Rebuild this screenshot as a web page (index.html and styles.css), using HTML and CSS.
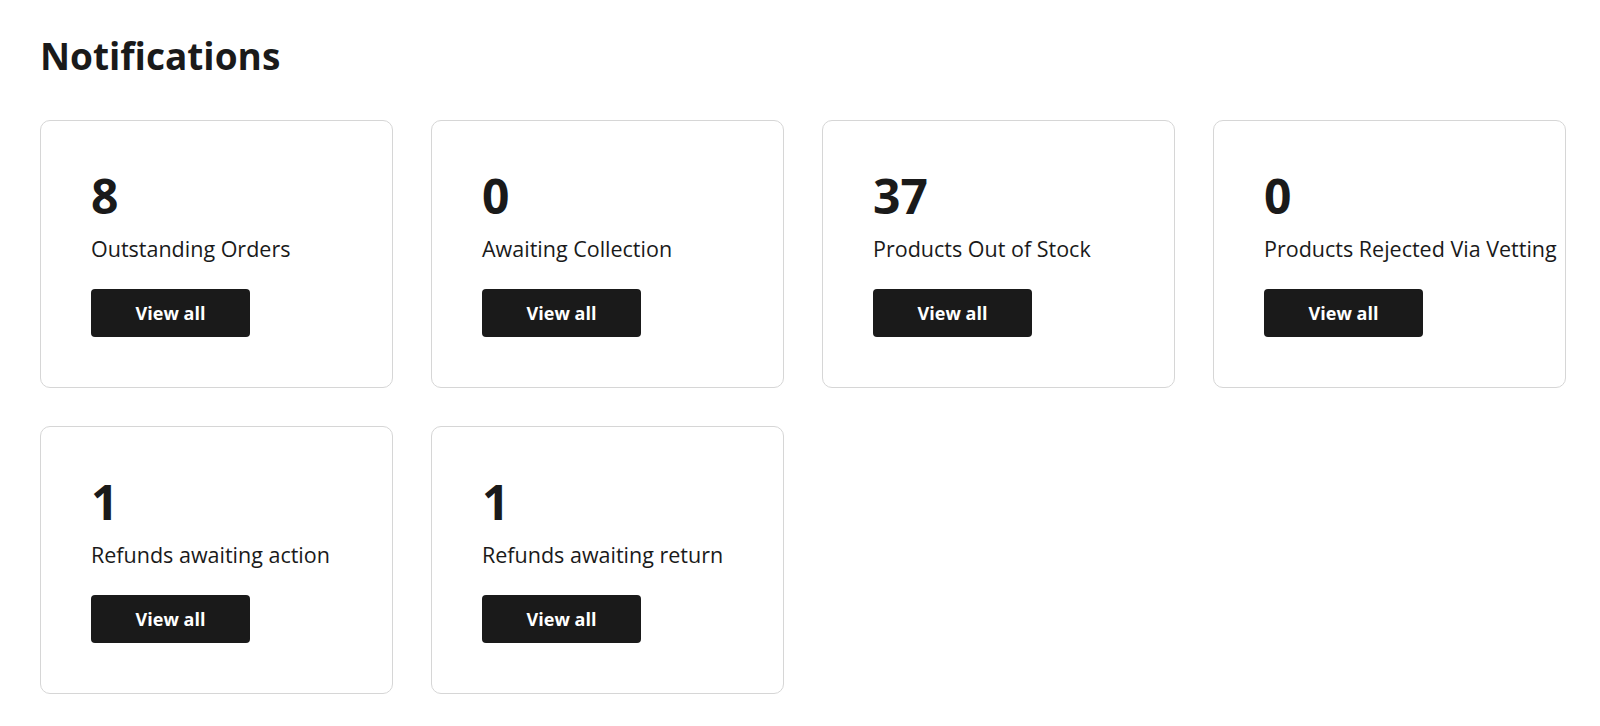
FILE: index.html
```html
<!DOCTYPE html>
<html lang="en">
<head>
<meta charset="utf-8">
<title>Notifications</title>
<link rel="stylesheet" href="styles.css">
</head>
<body>
<main class="page">
  <h1 class="title">Notifications</h1>
  <section class="grid">
    <div class="card">
      <div class="count">8</div>
      <div class="label">Outstanding Orders</div>
      <button class="btn">View all</button>
    </div>
    <div class="card">
      <div class="count">0</div>
      <div class="label">Awaiting Collection</div>
      <button class="btn">View all</button>
    </div>
    <div class="card">
      <div class="count">37</div>
      <div class="label">Products Out of Stock</div>
      <button class="btn">View all</button>
    </div>
    <div class="card">
      <div class="count">0</div>
      <div class="label">Products Rejected Via Vetting</div>
      <button class="btn">View all</button>
    </div>
    <div class="card">
      <div class="count">1</div>
      <div class="label">Refunds awaiting action</div>
      <button class="btn">View all</button>
    </div>
    <div class="card">
      <div class="count">1</div>
      <div class="label">Refunds awaiting return</div>
      <button class="btn">View all</button>
    </div>
  </section>
</main>
</body>
</html>
```
FILE: styles.css
```css
* { box-sizing: border-box; }
html, body {
  margin: 0;
  background: #ffffff;
  color: #1a1a1a;
  font-family: "Open Sans", "Noto Sans", sans-serif;
}
.page {
  padding: 34px 34px 0 40px;
}
.title {
  margin: 0 0 42px 0;
  font-size: 37px;
  line-height: 44px;
  font-weight: 700;
  color: #1a1a1a;
}
.grid {
  display: grid;
  grid-template-columns: repeat(4, minmax(0, 1fr));
  column-gap: 38px;
  row-gap: 38px;
}
.card {
  min-width: 0;
  border: 1px solid #d6d6d6;
  border-radius: 10px;
  padding: 46px 0 49px 50px;
  display: flex;
  flex-direction: column;
  align-items: flex-start;
  height: 268px;
}
.count {
  font-size: 48px;
  line-height: 57px;
  font-weight: 700;
  color: #1a1a1a;
}
.label {
  margin-top: 10px;
  font-size: 21.5px;
  line-height: 30px;
  color: #1a1a1a;
  white-space: nowrap;
}
.btn {
  margin-top: 25px;
  width: 159px;
  height: 48px;
  border: none;
  border-radius: 4px;
  background: #1a1a1a;
  color: #ffffff;
  font-family: "Open Sans", "Noto Sans", sans-serif;
  font-size: 18px;
  font-weight: 700;
  padding: 0;
  cursor: pointer;
}
```
